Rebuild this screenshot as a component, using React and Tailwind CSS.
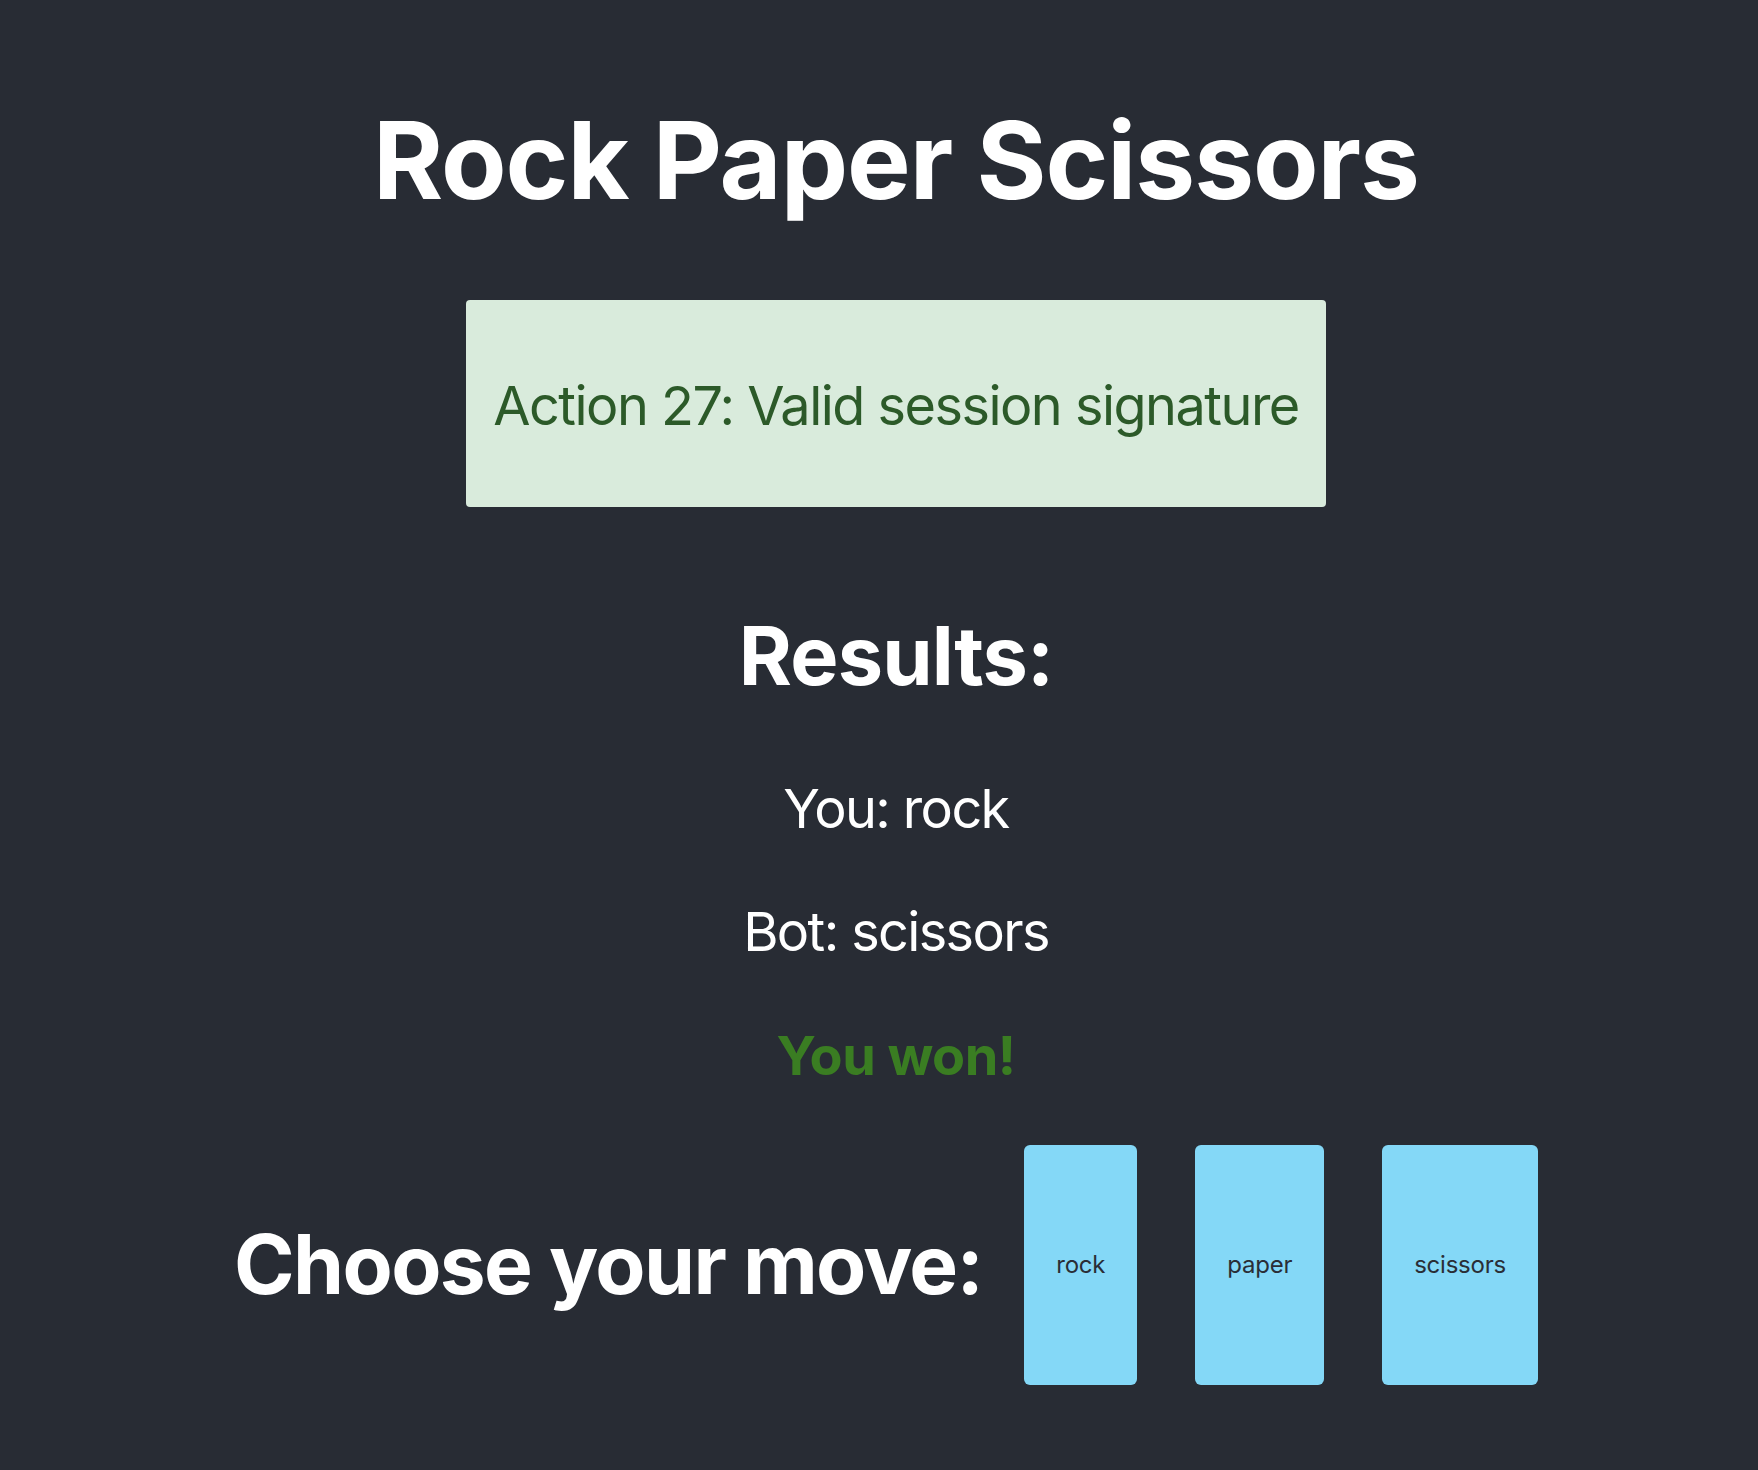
export default function App() {
  const moves = ["rock", "paper", "scissors"];
  return (
    <div
      className="min-h-[1470px] w-full bg-[#282c34] flex flex-col items-center pl-[34px] text-white"
      style={{ fontFamily: 'Inter, "Noto Sans", sans-serif' }}
    >
      <h1 className="mt-[96px] text-[107px] font-bold leading-[1.2] tracking-[-0.01em]">
        Rock Paper Scissors
      </h1>
      <div className="mt-[76px] w-[860px] h-[207px] rounded-[4px] bg-[#d9ebdc] flex items-center justify-center">
        <span className="text-[54px] leading-[1.2] tracking-[-0.028em] text-[#2c5a29] translate-y-[3px]">
          Action 27: Valid session signature
        </span>
      </div>
      <h2 className="mt-[101px] text-[81px] font-bold leading-[1.2] tracking-[-0.01em]">Results:</h2>
      <p className="mt-[71px] text-[54px] leading-[1.2] tracking-[-0.03em]">You: rock</p>
      <p className="mt-[59px] text-[54px] leading-[1.2] tracking-[-0.03em]">Bot: scissors</p>
      <p className="mt-[59px] text-[54px] leading-[1.2] font-bold tracking-[-0.01em] text-[#3a7d22]">You won!</p>
      <div className="mt-[56px] mr-[20px] flex items-center">
        <h2 className="text-[82px] font-bold leading-[1.2] tracking-[-0.02em] mr-[42px]">Choose your move:</h2>
        <div className="flex items-center gap-[58px]">
          {moves.map((m) => (
            <button
              key={m}
              className="h-[240px] px-[32px] rounded-[6px] bg-[#84d8f7] text-[24px] tracking-[-0.01em] text-[#2a2e36]"
            >
              {m}
            </button>
          ))}
        </div>
      </div>
    </div>
  );
}
